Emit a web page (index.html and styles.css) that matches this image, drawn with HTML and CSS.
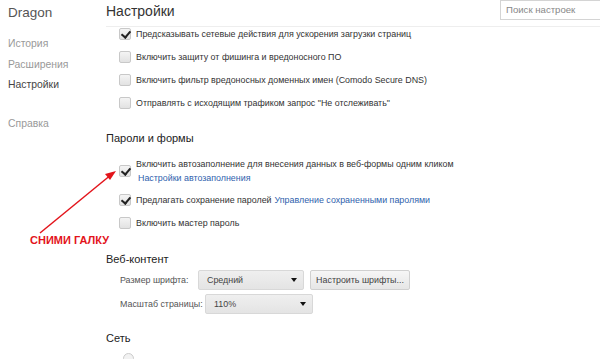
FILE: index.html
```html
<!DOCTYPE html>
<html lang="ru">
<head>
<meta charset="utf-8">
<link rel="stylesheet" href="styles.css">
</head>
<body>
<div class="page">
  <nav class="sidebar">
    <div class="brand">Dragon</div>
    <ul class="nav">
      <li>История</li>
      <li>Расширения</li>
      <li class="active">Настройки</li>
    </ul>
    <div class="nav help">Справка</div>
  </nav>
  <main class="main">
    <header class="header">
      <h1 class="title">Настройки</h1>
      <div class="search">Поиск настроек</div>
    </header>
    <div class="rows first">
      <div class="row"><span class="cb checked"></span>Предсказывать сетевые действия для ускорения загрузки страниц</div>
      <div class="row"><span class="cb"></span>Включить защиту от фишинга и вредоносного ПО</div>
      <div class="row"><span class="cb"></span>Включить фильтр вредоносных доменных имен (Comodo Secure DNS)</div>
      <div class="row"><span class="cb"></span>Отправлять с исходящим трафиком запрос "Не отслеживать"</div>
    </div>

    <h2 class="section pw">Пароли и формы</h2>
    <div class="rows">
      <div class="row two"><span class="cb checked"></span><div class="lines"><div>Включить автозаполнение для внесения данных в веб-формы одним кликом</div><a class="link">Настройки автозаполнения</a></div></div>
      <div class="row"><span class="cb checked"></span>Предлагать сохранение паролей <a class="link gap">Управление сохраненными паролями</a></div>
      <div class="row"><span class="cb"></span>Включить мастер пароль</div>
    </div>

    <h2 class="section web">Веб-контент</h2>
    <div class="form">
      <div class="frow">
        <span class="label l1">Размер шрифта:</span>
        <span class="select s1">Средний<i class="tri"></i></span>
        <span class="btn">Настроить шрифты...</span>
      </div>
      <div class="frow">
        <span class="label l2">Масштаб страницы:</span>
        <span class="select s2">110%<i class="tri"></i></span>
      </div>
    </div>

    <h2 class="section net">Сеть</h2>
    <div class="radio"></div>
  </main>

  <div class="note">
    <svg class="arrow" width="100" height="80" viewBox="0 0 100 80">
      <line x1="10" y1="73" x2="82" y2="14" stroke="#e3141b" stroke-width="1.5"/>
      <path d="M86 11 L75 14 L80 20 Z" fill="#e3141b"/>
    </svg>
    <div class="note-text">СНИМИ ГАЛКУ</div>
  </div>
</div>
</body>
</html>
```
FILE: styles.css
```css
* { box-sizing: border-box; }
html, body { margin: 0; padding: 0; background: #fff; }
body {
  font-family: "Liberation Sans", Arial, sans-serif;
  font-size: 8.9px;
  color: #333;
  width: 600px;
  height: 359px;
  overflow: hidden;
}
.page { display: flex; position: relative; height: 359px; }
.sidebar { width: 106px; flex: none; padding-left: 8px; }
.brand { font-size: 13.5px; color: #555; line-height: 20px; margin-top: 3px; }
.nav { list-style: none; margin: 11px 0 0; padding: 0; color: #999; font-size: 10.4px; }
.nav li { line-height: 20.5px; }
.nav li.active { color: #444; }
.help { margin-top: 22px; }

.main { flex: 1; min-width: 0; }
.header {
  display: flex; align-items: center; justify-content: space-between;
  height: 27px; border-bottom: 1px solid #eee;
}
.title { margin: 0; font-weight: normal; font-size: 14px; color: #333; line-height: 20px; margin-top: -4px; }
.search {
  width: 100px; height: 20px; margin-top: -6px;
  border: 1px solid #d4d4d4; border-right: none;
  color: #888; font-size: 9.6px; line-height: 18px; padding-left: 5px; white-space: nowrap;
}

.rows { padding-left: 13px; }
.rows.first { margin-top: -5px; }
.row { display: flex; align-items: center; height: 23px; white-space: nowrap; }
.row.two { height: 35px; align-items: center; }
.lines { line-height: 14px; }
.cb {
  width: 12px; height: 12px; flex: none; margin-right: 5px;
  border: 1px solid #c8c8c8; border-radius: 2px;
  background: linear-gradient(#f4f4f4, #e2e2e2);
  position: relative;
}
.cb.checked::after {
  content: ""; position: absolute; left: 3px; top: 0px;
  width: 4px; height: 7px;
  border: solid #222; border-width: 0 2px 2px 0;
  transform: rotate(40deg);
}
.link { color: #2f5fad; text-decoration: none; }
.lines .link { padding-left: 2px; }
.gap { margin-left: 3px; }

.section { margin: 0; font-weight: normal; font-size: 11px; color: #222; line-height: 18px; }
.section.pw { margin-top: 15px; margin-bottom: 6px; }
.section.web { margin-top: 16px; margin-bottom: 0; }
.section.net { margin-top: 13px; }

.form { padding-left: 14px; }
.frow { display: flex; align-items: center; height: 24px; white-space: nowrap; }
.label { color: #555; flex: none; }
.l1 { width: 78px; }
.l2 { width: 85px; }
.select {
  display: flex; align-items: center; justify-content: space-between; flex: none;
  height: 20px; border: 1px solid #d8d8d8; border-radius: 2px;
  background: linear-gradient(#efefef, #e4e4e4);
  padding: 0 6px 0 8px; color: #444;
}
.s1 { width: 106px; }
.s2 { width: 108px; }
.tri { width: 0; height: 0; border-left: 3.5px solid transparent; border-right: 3.5px solid transparent; border-top: 4px solid #111; }
.btn {
  height: 20px; line-height: 18px; margin-left: 6px; width: 100px; flex: none; text-align: center;
  border: 1px solid #d0d0d0; border-radius: 2px;
  background: linear-gradient(#f6f6f6, #e6e6e6); color: #444;
}
.radio { width: 11px; height: 11px; border: 1px solid #ccc; border-radius: 50%; margin: 6px 0 0 17px; background: #f2f2f2; }

.note { position: absolute; left: 0; top: 0; }
.arrow { position: absolute; left: 30px; top: 160px; }
.note-text { position: absolute; left: 30px; top: 232px; white-space: nowrap; color: #e3141b; font-weight: bold; font-size: 11px; line-height: 16px; }
```
